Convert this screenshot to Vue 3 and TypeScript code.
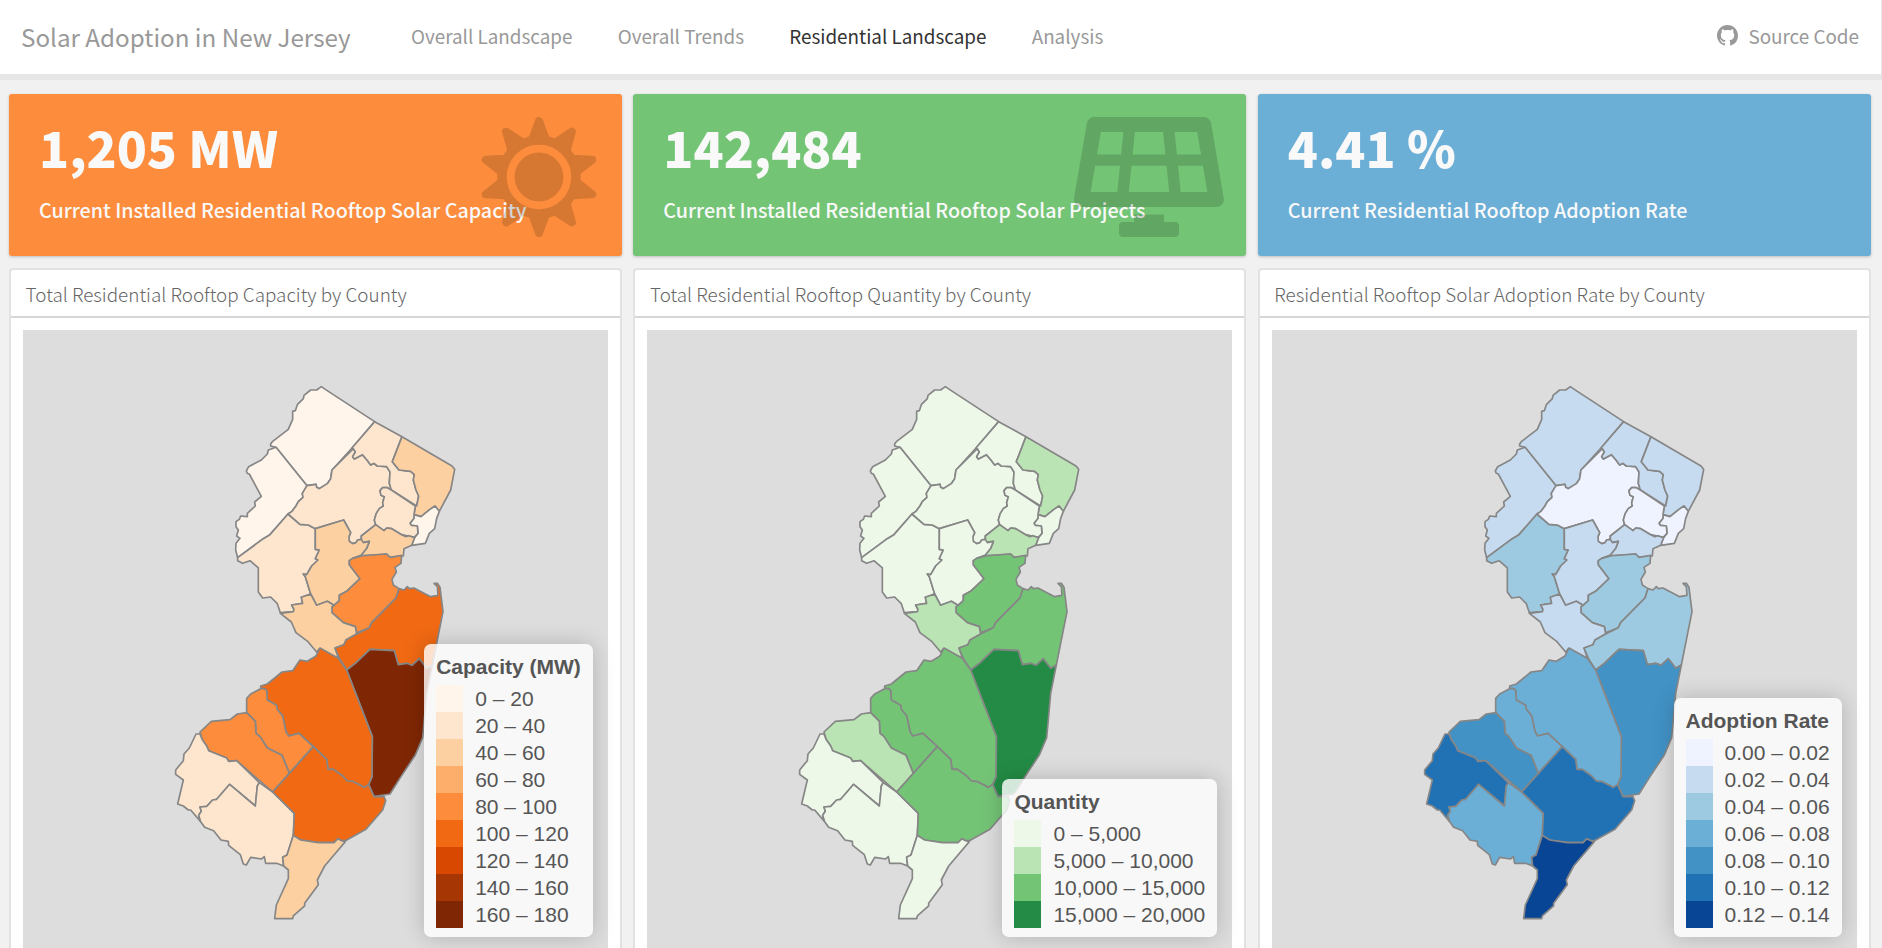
<script setup lang="ts">
interface County {
  name: string
  points: string
  south?: boolean
}

interface LegendItem {
  color: string
  label: string
}

interface Panel {
  kind: string
  value: string
  caption: string
  title: string
  legendTitle: string
  legend: LegendItem[]
  classes: Record<string, number>
}

const links = ['Overall Landscape', 'Overall Trends', 'Residential Landscape', 'Analysis']
const activeLink = 'Residential Landscape'

// The southern counties are outlined against their own origin.
const counties: County[] = [
  { name: 'Sussex', points: '152,228 152,222 158,214 205,178 218,148 218,124 226,122 232,104 250,86 252,76 272,60 290,60 304,50 316,58 464,155 396,234 336,300 332,326 322,341 298,356 290,352 288,343 261,347 168,232' },
  { name: 'Warren', points: '168,232 145,240 142,252 124,270 86,290 79,303 82,310 88,312 124,379 104,396 106,408 82,430 82,440 62,438 58,448 48,455 48,470 55,480 50,498 60,505 48,520 47,540 53,563 130,506 150,494 204,432 215,425 228,408 235,395 249,382 247,370 261,347' },
  { name: 'Hunterdon', points: '53,563 53,572 68,580 90,572 115,594 115,666 128,684 152,681 172,701 181,728 220,725 222,718 215,705 248,700 244,682 272,672 256,620 250,612 260,614 275,588 294,570 286,566 298,540 286,538 286,476 265,465 240,463 204,432 150,494 130,506' },
  { name: 'Morris', points: '204,432 240,463 265,465 286,476 371,450 392,488 387,500 388,514 398,521 408,518 413,510 424,508 424,498 467,464 463,450 469,430 478,416 490,408 488,398 493,380 483,376 480,362 488,353 502,353 514,360 508,340 510,306 500,290 472,288 462,280 452,285 441,270 427,254 403,267 398,260 406,246 400,236 336,300 332,326 322,341 298,356 290,352 288,343 261,347 247,370 249,382 235,395 228,408 215,425' },
  { name: 'Passaic', points: '464,155 546,200 517,275 537,300 572,304 583,314 580,330 588,360 596,378 590,408 514,360 508,340 510,306 500,290 472,288 462,280 452,285 441,270 427,254 403,267 398,260 406,246 400,236 396,234' },
  { name: 'Bergen', points: '546,200 696,288 704,298 692,360 658,424 645,408 630,418 615,430 603,440 582,434 586,408 590,408 596,378 588,360 580,330 583,314 572,304 537,300 517,275' },
  { name: 'Hudson', points: '582,434 603,440 615,430 630,418 645,408 658,424 650,445 644,476 628,490 616,520 575,526 582,505 594,490 592,468 574,466 570,460 582,445' },
  { name: 'Essex', points: '514,360 586,408 582,434 582,445 570,460 574,466 592,468 594,490 582,503 565,498 545,494 515,476 500,474 492,482 467,464 463,450 469,430 478,416 490,408 488,398 493,380 483,376 480,362 488,353 502,353' },
  { name: 'Union', points: '467,464 492,482 500,474 515,476 545,494 558,500 565,497 584,503 575,526 552,536 550,558 510,562 500,552 428,558 424,555 440,535 448,514 424,518 424,498' },
  { name: 'Somerset', points: '286,476 371,450 392,488 387,500 388,514 398,521 408,518 413,510 424,508 430,518 448,514 440,535 424,555 398,565 388,572 388,584 420,626 380,664 358,676 358,692 342,706 322,694 290,706 272,672 256,620 250,612 260,614 275,588 294,570 286,566 298,540 286,538' },
  { name: 'Middlesex', points: '388,584 388,572 398,565 428,557 500,552 510,562 545,556 543,580 525,592 529,606 516,628 520,645 537,656 528,684 455,758 448,773 410,788 406,770 370,758 336,728 336,710 342,706 358,692 358,676 380,664 420,626' },
  { name: 'Mercer', points: '181,730 220,725 222,718 215,705 248,700 244,682 272,672 290,706 322,694 342,706 336,710 336,728 370,758 406,770 410,792 378,810 372,824 345,834 356,866 298,836 290,846 264,815 228,788 214,756' },
  { name: 'Monmouth', points: '537,656 552,660 562,650 568,656 582,654 632,680 654,676 652,650 642,640 652,640 660,652 669,725 637,885 620,895 598,866 576,886 560,880 535,884 523,842 450,838 406,880 380,900 358,865 345,834 372,824 378,810 410,792 448,773 455,758 528,684' },
  { name: 'Ocean', points: '380,900 406,880 450,838 523,842 535,884 560,880 576,886 598,866 620,895 637,885 620,970 608,1103 586,1155 543,1220 510,1272 462,1280 446,1244 456,1220 457,1100' },
  { name: 'Burlington', south: true, points: '480,84 535,115 560,150 637,350 636,470 626,494 612,503 606,498 580,485 562,483 548,468 520,448 504,448 500,418 460,380 417,340 386,348 378,335 368,288 352,268 350,256 322,240 320,212 314,206 302,206 302,198 322,192 366,156 398,152 420,120 442,124 468,108' },
  { name: 'Camden', south: true, points: '302,206 314,206 320,212 322,240 350,256 352,268 368,288 378,335 386,348 417,340 460,380 388,460 366,406 322,384 300,350 288,340 286,304 260,278 260,235 272,222' },
  { name: 'Gloucester', south: true, points: '260,278 286,304 288,340 300,350 322,384 366,406 388,460 338,516 230,422 206,424 200,414 146,392 140,378 126,358 120,336 154,304 210,299 232,282' },
  { name: 'Salem', south: true, points: '108,342 120,342 126,358 140,378 146,392 200,414 206,424 230,422 298,488 292,498 286,558 209,493 170,538 158,540 140,559 120,561 124,574 116,586 122,605 92,570 85,570 70,558 53,552 70,480 47,463 47,450 70,422 72,402 88,384' },
  { name: 'Cumberland', south: true, points: '298,488 338,516 403,580 400,646 381,705 368,712 371,738 350,730 317,730 313,710 305,717 272,712 259,735 250,732 241,704 206,676 205,664 183,660 161,632 134,622 122,605 116,586 124,574 120,561 140,559 158,540 170,538 209,493 286,558 292,498' },
  { name: 'Atlantic', south: true, points: '460,380 500,418 504,448 520,448 548,468 562,483 580,485 606,498 612,503 626,494 642,530 672,530 677,542 668,570 618,628 556,662 545,662 534,656 522,668 475,668 422,660 400,646 403,580 338,516' },
  { name: 'Cape May', south: true, points: '400,646 422,660 475,668 522,668 534,656 545,662 556,665 494,738 472,780 475,794 434,850 434,858 400,888 398,896 344,896 349,855 385,776 385,750 371,738 368,712 381,705' },
]

const panels: Panel[] = [
  {
    kind: 'capacity',
    value: '1,205 MW',
    caption: 'Current Installed Residential Rooftop Solar Capacity',
    title: 'Total Residential Rooftop Capacity by County',
    legendTitle: 'Capacity (MW)',
    legend: [
      { color: '#fff5eb', label: '0 – 20' },
      { color: '#fee6ce', label: '20 – 40' },
      { color: '#fdd0a2', label: '40 – 60' },
      { color: '#fdae6b', label: '60 – 80' },
      { color: '#fd8d3c', label: '80 – 100' },
      { color: '#f16913', label: '100 – 120' },
      { color: '#d94801', label: '120 – 140' },
      { color: '#a63603', label: '140 – 160' },
      { color: '#7f2704', label: '160 – 180' },
    ],
    classes: {
      Passaic: 1, Morris: 1, Essex: 1, Hunterdon: 1, Salem: 1, Cumberland: 1,
      Bergen: 2, Somerset: 2, Union: 2, Mercer: 2, 'Cape May': 2,
      Middlesex: 4, Camden: 4, Gloucester: 4,
      Monmouth: 5, Burlington: 5, Atlantic: 5, Ocean: 8,
    },
  },
  {
    kind: 'quantity',
    value: '142,484',
    caption: 'Current Installed Residential Rooftop Solar Projects',
    title: 'Total Residential Rooftop Quantity by County',
    legendTitle: 'Quantity',
    legend: [
      { color: '#edf8e9', label: '0 – 5,000' },
      { color: '#bae4b3', label: '5,000 – 10,000' },
      { color: '#74c476', label: '10,000 – 15,000' },
      { color: '#238b45', label: '15,000 – 20,000' },
    ],
    classes: {
      Bergen: 1, Union: 1, Mercer: 1, Gloucester: 1,
      Middlesex: 2, Monmouth: 2, Burlington: 2, Camden: 2, Atlantic: 2, Ocean: 3,
    },
  },
  {
    kind: 'rate',
    value: '4.41 %',
    caption: 'Current Residential Rooftop Adoption Rate',
    title: 'Residential Rooftop Solar Adoption Rate by County',
    legendTitle: 'Adoption Rate',
    legend: [
      { color: '#eff3ff', label: '0.00 – 0.02' },
      { color: '#c6dbef', label: '0.02 – 0.04' },
      { color: '#9ecae1', label: '0.04 – 0.06' },
      { color: '#6baed6', label: '0.06 – 0.08' },
      { color: '#4292c6', label: '0.08 – 0.10' },
      { color: '#2171b5', label: '0.10 – 0.12' },
      { color: '#084594', label: '0.12 – 0.14' },
    ],
    classes: {
      Sussex: 1, Warren: 1, Passaic: 1, Bergen: 1, Somerset: 1, Union: 1, Mercer: 1,
      Hunterdon: 2, Middlesex: 2, Monmouth: 2,
      Burlington: 3, Camden: 3, Cumberland: 3,
      Ocean: 4, Gloucester: 4, Atlantic: 5, Salem: 5, 'Cape May': 6,
    },
  },
]

function fillOf(panel: Panel, county: County): string {
  return panel.legend[panel.classes[county.name] ?? 0].color
}

// Ten-pointed burst around (60, 60): each spike is a tip and a flat valley.
const spike = [[0, 56], [10.5, 38], [25.5, 38]]
const sunPoints = Array.from({ length: 10 }, (_, i) =>
  spike.map(([offset, radius]) => {
    const angle = ((i * 36 + offset) * Math.PI) / 180
    return `${(60 + radius * Math.sin(angle)).toFixed(2)},${(60 - radius * Math.cos(angle)).toFixed(2)}`
  }).join(' '),
).join(' ')
</script>

<template>
  <div class="page">
    <header class="navbar">
      <span class="brand">Solar Adoption in New Jersey</span>
      <nav class="links">
        <a v-for="link in links" :key="link" class="link" :class="{ active: link === activeLink }">{{ link }}</a>
      </nav>
      <a class="link source">
        <svg class="github" viewBox="0 0 16 16">
          <path d="M8 0C3.58 0 0 3.58 0 8c0 3.54 2.29 6.53 5.47 7.59.4.07.55-.17.55-.38 0-.19-.01-.82-.01-1.49-2.01.37-2.53-.49-2.69-.94-.09-.23-.48-.94-.82-1.13-.28-.15-.68-.52-.01-.53.63-.01 1.08.58 1.23.82.72 1.21 1.87.87 2.33.66.07-.52.28-.87.51-1.07-1.78-.2-3.64-.89-3.64-3.95 0-.87.31-1.59.82-2.15-.08-.2-.36-1.02.08-2.12 0 0 .67-.21 2.2.82.64-.18 1.32-.27 2-.27s1.36.09 2 .27c1.53-1.04 2.2-.82 2.2-.82.44 1.1.16 1.92.08 2.12.51.56.82 1.27.82 2.15 0 3.07-1.87 3.75-3.65 3.95.29.25.54.73.54 1.48 0 1.07-.01 1.93-.01 2.2 0 .21.15.46.55.38A8.01 8.01 0 0 0 16 8c0-4.42-3.58-8-8-8z" />
        </svg>
        <span>Source Code</span>
      </a>
    </header>

    <main class="columns">
      <section v-for="panel in panels" :key="panel.kind" class="column">
        <div class="value-box" :class="panel.kind">
          <div class="value">{{ panel.value }}</div>
          <div class="caption">{{ panel.caption }}</div>
          <svg v-if="panel.kind === 'capacity'" class="icon sun" viewBox="0 0 120 120">
            <mask id="sun-ring">
              <rect width="120" height="120" fill="#fff" />
              <circle cx="60" cy="60" r="28.3" fill="none" stroke="#000" stroke-width="7.8" />
            </mask>
            <g mask="url(#sun-ring)">
              <polygon :points="sunPoints" fill="#000" stroke="#000" stroke-width="8" stroke-linejoin="round" />
            </g>
          </svg>
          <svg v-if="panel.kind === 'quantity'" class="icon solar" viewBox="0 0 640 512">
            <path d="M431.98 448.01l-47.97.05V416h-128v32.21l-47.98.05c-8.82.01-15.97 7.16-15.98 15.99l-.05 31.73c-.01 8.85 7.17 16.03 16.02 16.02l223.96-.26c8.82-.01 15.97-7.16 15.98-15.98l.04-31.73c.01-8.85-7.17-16.03-16.02-16.02zM585.2 26.74C582.58 11.31 568.99 0 553.06 0H86.93C71 0 57.41 11.31 54.79 26.74-3.32 369.16.04 348.08.03 352c-.03 17.32 14.29 32 32.6 32h574.74c18.23 0 32.51-14.56 32.59-31.79.02-4.08 3.35 16.95-54.76-325.47zM259.83 64h120.33l9.77 96H250.06l9.77-96zm-75.17 256H71.09L90.1 208h105.97l-11.41 112zm16.29-160H98.24l16.29-96h96.19l-9.77 96zm32.82 160l11.4-112h149.65l11.4 112H233.77zm195.5-256h96.19l16.29 96H439.04l-9.77-96zm26.06 256l-11.4-112H549.9l19.01 112H455.33z" />
          </svg>
        </div>

        <div class="card">
          <h2 class="card-title">{{ panel.title }}</h2>
          <div class="map">
            <svg class="shapes" viewBox="0 0 585 622">
              <g transform="translate(197 40) scale(0.33333)">
                <polygon
                  v-for="county in counties"
                  :key="county.name"
                  class="county"
                  :points="county.points"
                  :fill="fillOf(panel, county)"
                  :transform="county.south ? 'translate(-180 750)' : undefined"
                />
              </g>
            </svg>
            <div class="legend">
              <div class="legend-title">{{ panel.legendTitle }}</div>
              <div v-for="item in panel.legend" :key="item.label" class="legend-row">
                <i class="swatch" :style="{ background: item.color }"></i>
                <span>{{ item.label }}</span>
              </div>
            </div>
          </div>
        </div>
      </section>
    </main>
  </div>
</template>

<style>
body {
  background: #f1f1f1;
}
</style>

<style scoped>
.page {
  height: 948px;
  overflow: hidden;
  background: #f1f1f1;
  font-family: "Noto Sans CJK SC", "Noto Sans", sans-serif;
}
.navbar {
  box-sizing: border-box;
  height: 80px;
  display: flex;
  align-items: flex-start;
  padding: 0 22px 0 21px;
  background: #fff;
  border-bottom: 6px solid #e6e6e6;
  border-right: 1px solid #e6e6e6;
  color: #999;
  white-space: nowrap;
}
.brand {
  width: 390px;
  font-size: 24.2px;
  line-height: 74px;
}
.links {
  display: flex;
  gap: 45.2px;
}
.link {
  font-size: 18.85px;
  line-height: 72px;
}
.link.active {
  color: #333;
}
.source {
  margin-left: auto;
  display: flex;
  align-items: center;
  gap: 10px;
}
.github {
  width: 21px;
  height: 21px;
  fill: #999;
  margin-bottom: 1px;
}
.columns {
  display: grid;
  grid-template-columns: repeat(3, minmax(0, 1fr));
  gap: 11.5px;
  padding: 14px 11.4px 0 9px;
}
.value-box {
  position: relative;
  box-sizing: border-box;
  height: 162px;
  padding: 17px 30px 0;
  border-radius: 3px;
  box-shadow: 0 1px 3px rgba(0, 0, 0, 0.22);
  color: #f9f9f9;
  white-space: nowrap;
}
.capacity {
  background: #fd8d3c;
}
.quantity {
  background: #74c476;
}
.rate {
  background: #6baed6;
}
.value {
  font-size: 49.5px;
  font-weight: 900;
  line-height: 72px;
}
.caption {
  margin-top: 3px;
  font-size: 19.7px;
  font-weight: 500;
  line-height: 48px;
}
.icon {
  position: absolute;
  top: 23px;
  height: 120px;
  opacity: 0.15;
}
.sun {
  right: 22.5px;
  width: 120px;
}
.solar {
  right: 22.5px;
  width: 150px;
}
.card {
  box-sizing: border-box;
  height: 698px;
  margin-top: 12px;
  border: 2px solid #e2e2e2;
  border-radius: 4px;
  background: #fff;
}
.card-title {
  margin: 0;
  height: 46px;
  padding-left: 14.6px;
  border-bottom: 2px solid #d6d6d6;
  color: #666;
  font-size: 18.87px;
  font-weight: 300;
  line-height: 47px;
  white-space: nowrap;
}
.map {
  position: relative;
  height: 622px;
  margin: 12px 12px 0;
  background: #ddd;
}
.shapes {
  display: block;
  width: 585px;
  height: 622px;
}
.county {
  stroke: #868686;
  stroke-width: 5;
  stroke-linejoin: round;
}
.legend {
  position: absolute;
  right: 15px;
  bottom: 15px;
  padding: 9px 12px;
  border-radius: 7px;
  background: rgba(255, 255, 255, 0.8);
  box-shadow: 0 0 22px rgba(0, 0, 0, 0.2);
  color: #555;
  font-family: "Liberation Sans", Arial, sans-serif;
  font-size: 21px;
  line-height: 27px;
  white-space: nowrap;
}
.legend-title {
  margin-bottom: 5px;
  font-weight: 700;
}
.legend-row {
  display: flex;
  gap: 12px;
}
.swatch {
  width: 27px;
  height: 27px;
}
</style>
